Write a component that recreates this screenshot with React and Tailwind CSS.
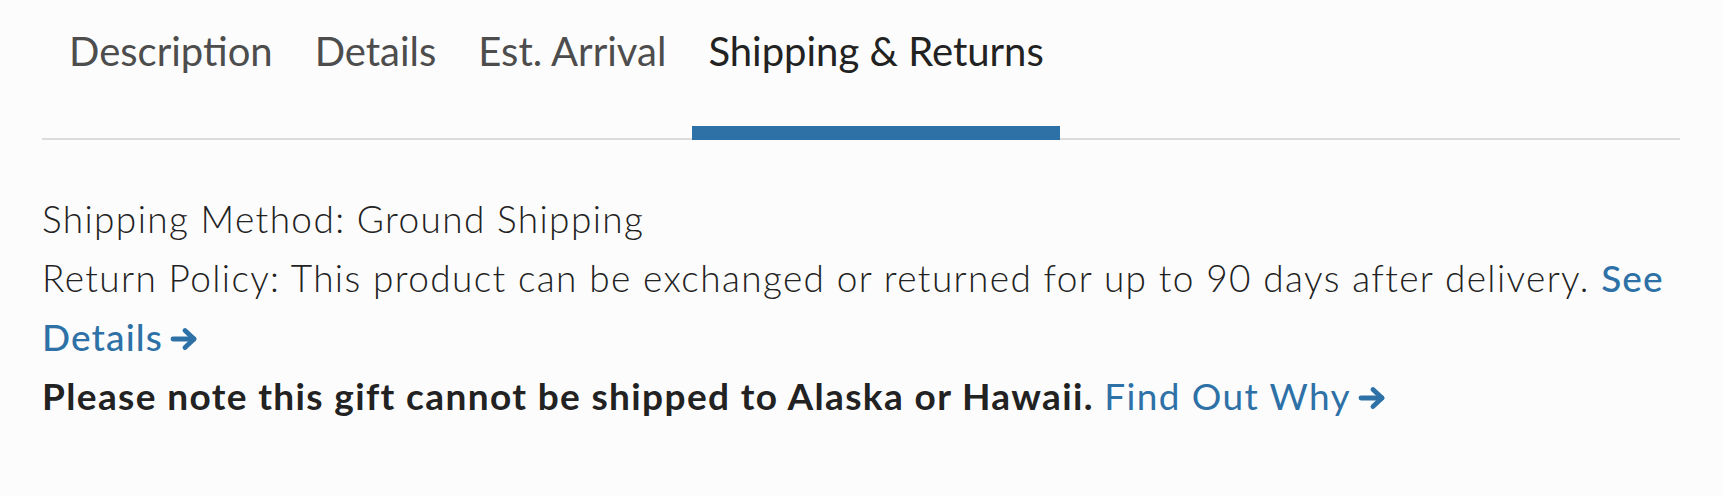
import React, { useState } from 'react';

const tabs = ['Description', 'Details', 'Est. Arrival', 'Shipping & Returns'];

function Arrow() {
  return (
    <svg width="28" height="24" viewBox="0 0 28 24" className="inline-block ml-[7px] -mt-[6px] align-middle" fill="none" stroke="currentColor" strokeWidth="4.8" strokeLinecap="round" strokeLinejoin="round">
      <path d="M3 12h21" />
      <path d="M15 3.5l9 8.5-9 8.5" />
    </svg>
  );
}

export default function App() {
  const [active, setActive] = useState('Shipping & Returns');

  return (
    <div className="min-h-[496px] bg-[#fcfcfc] px-[42px] text-[#222]" style={{ fontFamily: 'Lato, "Open Sans", sans-serif' }}>
      <div className="flex gap-[10px] pl-[11px] border-b-2 border-[#dcdcdc]">
        {tabs.map(tab => (
          <button
            key={tab}
            onClick={() => setActive(tab)}
            className={`flex flex-col pt-[27px] text-[40px] leading-[48px] font-normal ${
              active === tab ? 'text-[#222]' : 'text-[#4d4d4d]'
            }`}
          >
            <span className="whitespace-nowrap px-[16px]">{tab}</span>
            <span className={`block h-[14px] mt-[51px] -mb-[2px] self-stretch ${active === tab ? 'bg-[#2d71a7]' : 'bg-transparent'}`} />
          </button>
        ))}
      </div>

      <div className="pt-[49px] text-[37px] leading-[59px] font-light tracking-[0.037em]">
        <p>Shipping Method: Ground Shipping</p>
        <p>
          Return Policy: This product can be exchanged or returned for up to 90 days after delivery.{' '}
          <a href="#" className="text-[#2d71a7] font-medium tracking-[0.03em]">
            See <span className="whitespace-nowrap">Details<Arrow /></span>
          </a>
        </p>
        <p className="font-bold">
          Please note this gift cannot be shipped to Alaska or Hawaii.{' '}
          <a href="#" className="text-[#2d71a7] font-normal whitespace-nowrap">
            Find Out Why<Arrow />
          </a>
        </p>
      </div>
    </div>
  );
}
